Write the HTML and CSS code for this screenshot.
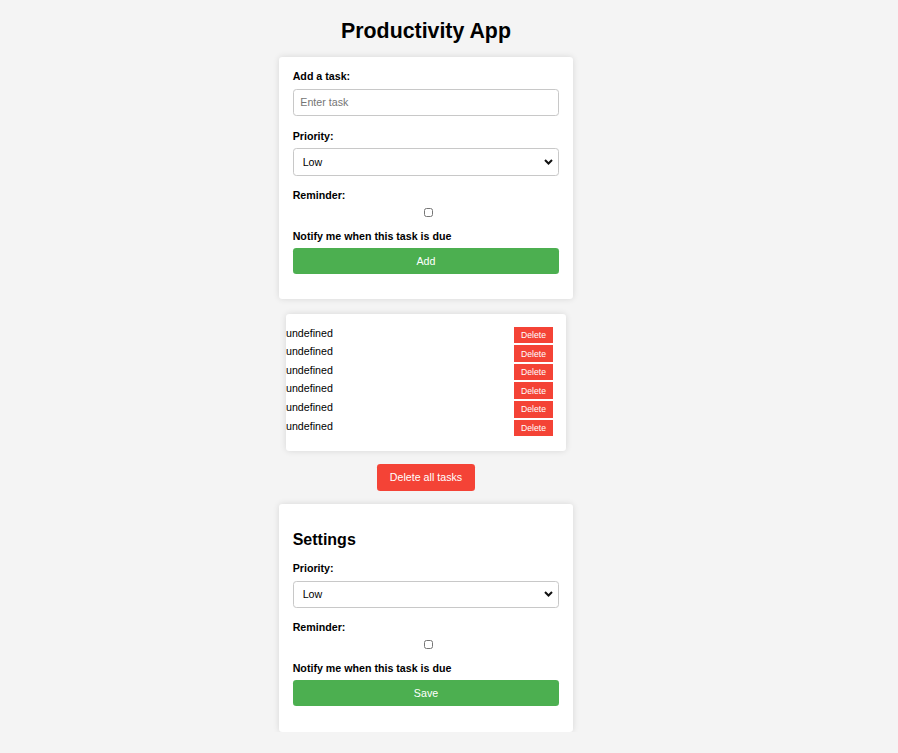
FILE: index.html
```html
<!DOCTYPE html>
<html lang="en">
<head>
<meta charset="utf-8">
<title>Productivity App</title>
<link rel="stylesheet" href="styles.css">
</head>
<body>
<div class="page">
  <h1 class="title">Productivity App</h1>

  <div class="card form-card">
    <label class="field-label">Add a task:</label>
    <input class="text-input" type="text" placeholder="Enter task">
    <label class="field-label">Priority:</label>
    <div class="select-wrap">
      <select class="select"><option>Low</option><option>Medium</option><option>High</option></select>
      <svg class="chevron" width="9" height="6" viewBox="0 0 9 6"><path d="M1 1 L4.5 4.5 L8 1" fill="none" stroke="#111" stroke-width="2"/></svg>
    </div>
    <label class="field-label">Reminder:</label>
    <div class="check-row"><input class="check" type="checkbox"></div>
    <label class="field-label notify">Notify me when this task is due</label>
    <button class="btn btn-green btn-block">Add</button>
  </div>

  <div class="card list-card">
    <ul class="task-list">
      <li class="task-item"><span class="task-text">undefined</span><button class="btn-del">Delete</button></li>
      <li class="task-item"><span class="task-text">undefined</span><button class="btn-del">Delete</button></li>
      <li class="task-item"><span class="task-text">undefined</span><button class="btn-del">Delete</button></li>
      <li class="task-item"><span class="task-text">undefined</span><button class="btn-del">Delete</button></li>
      <li class="task-item"><span class="task-text">undefined</span><button class="btn-del">Delete</button></li>
      <li class="task-item"><span class="task-text">undefined</span><button class="btn-del">Delete</button></li>
    </ul>
  </div>

  <button class="btn btn-red">Delete all tasks</button>

  <div class="card form-card settings-card">
    <h2 class="settings-title">Settings</h2>
    <label class="field-label">Priority:</label>
    <div class="select-wrap">
      <select class="select"><option>Low</option><option>Medium</option><option>High</option></select>
      <svg class="chevron" width="9" height="6" viewBox="0 0 9 6"><path d="M1 1 L4.5 4.5 L8 1" fill="none" stroke="#111" stroke-width="2"/></svg>
    </div>
    <label class="field-label">Reminder:</label>
    <div class="check-row"><input class="check" type="checkbox"></div>
    <label class="field-label notify">Notify me when this task is due</label>
    <button class="btn btn-green btn-block">Save</button>
  </div>
</div>
</body>
</html>
```

FILE: styles.css
```css
html, body {
  margin: 0;
  padding: 0;
  background: #f4f4f4;
}

body {
  font-family: "Liberation Sans", Arial, sans-serif;
  font-size: 10.67px;
  color: #000;
}

.page {
  width: 852px;
  padding-top: 19px;
  display: flex;
  flex-direction: column;
  align-items: center;
}

.title {
  font-size: 21.33px;
  line-height: 24.5px;
  font-weight: bold;
  margin: 0 0 13.5px;
}

.card {
  background: #fff;
  border-radius: 3.33px;
  box-shadow: 0 0 6.67px rgba(0, 0, 0, 0.12);
}

.form-card {
  width: 266.67px;
  padding: 13.33px;
  display: flex;
  flex-direction: column;
}

.field-label {
  display: block;
  font-weight: bold;
  line-height: 12.3px;
  margin-bottom: 6.4px;
}

.field-label.notify {
  margin-bottom: 5.6px;
}

.text-input {
  box-sizing: border-box;
  width: 100%;
  height: 26.67px;
  margin: 0 0 14px;
  padding: 0 6.67px;
  border: 1px solid #c8c8c8;
  border-radius: 3.33px;
  font-family: inherit;
  font-size: 10.67px;
  color: #000;
  background: #fff;
  outline: none;
}

.text-input::placeholder {
  color: #757575;
}

.select-wrap {
  position: relative;
  margin-bottom: 13.3px;
}

.select {
  box-sizing: border-box;
  width: 100%;
  height: 27.33px;
  margin: 0;
  padding: 0 0 0 9px;
  border: 1px solid #c8c8c8;
  border-radius: 3.33px;
  font-family: inherit;
  font-size: 10.67px;
  color: #000;
  background: #fff;
  appearance: none;
  -webkit-appearance: none;
  outline: none;
}

.chevron {
  position: absolute;
  right: 6.5px;
  top: 10.5px;
  pointer-events: none;
}

.check-row {
  display: flex;
  justify-content: center;
  padding-left: 5.6px;
  margin-bottom: 13px;
}

.check {
  width: 9px;
  height: 9px;
  margin: 0;
}

.btn {
  border: none;
  border-radius: 3.33px;
  color: #fff;
  font-family: inherit;
  font-size: 10.67px;
  line-height: 12.3px;
  padding: 7px 13.33px;
  cursor: pointer;
}

.btn-block {
  width: 100%;
  margin-bottom: 12.3px;
}

.btn-green {
  background: #4caf50;
}

.btn-red {
  background: #f44336;
  margin: 13.33px 0;
}

.list-card {
  width: 266.67px;
  margin-top: 14.3px;
  padding: 12.8px 13.33px 12.8px 0;
}

.task-list {
  list-style: none;
  margin: 0;
  padding: 0;
}

.task-item {
  display: flex;
  justify-content: space-between;
  align-items: flex-start;
  margin-bottom: 1.95px;
}

.task-text {
  line-height: 12.3px;
}

.btn-del {
  border: none;
  border-radius: 0;
  background: #f44336;
  color: #fff;
  font-family: inherit;
  font-size: 8.67px;
  line-height: 10px;
  padding: 3.33px 6.67px;
}

.settings-title {
  font-size: 16px;
  line-height: 18.4px;
  font-weight: bold;
  margin: 13.33px 0 13px;
}
```
